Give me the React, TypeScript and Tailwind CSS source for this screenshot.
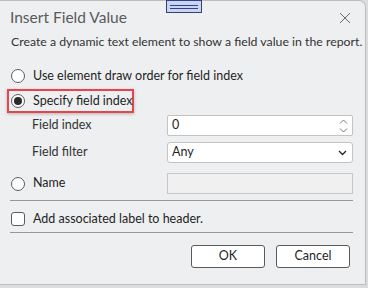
import React from 'react';

const font = { fontFamily: 'Lato, "Open Sans", sans-serif' };

function Radio({ checked }: { checked?: boolean }) {
  return (
    <span className="flex h-[14px] w-[14px] shrink-0 items-center justify-center rounded-full border border-[#5c5c5c] bg-white">
      {checked && <span className="h-[8px] w-[8px] rounded-full bg-[#2b2b2b]" />}
    </span>
  );
}

export default function App() {
  return (
    <div className="relative h-[288px] w-[368px] overflow-hidden bg-[#dcdcdc] text-[#1f1f1f]" style={font}>
      <div className="relative flex h-[285px] w-[366px] flex-col whitespace-nowrap rounded-tr-[7px] border-t border-r border-b border-[#bdbdbd] bg-[#eeeff1]">
        {/* title */}
        <div className="flex h-[33px] items-center justify-between pl-[10px] pr-[14px]">
          <span className="text-[15.5px] leading-none text-[#5a5a5a]">Insert Field Value</span>
          <svg width="12" height="12" viewBox="0 0 12 12">
            <path d="M1 1 L11 11 M11 1 L1 11" stroke="#6a6a6a" strokeWidth="1" />
          </svg>
        </div>
        <div className="flex h-[17px] items-center pl-[11px] text-[12.3px] text-[#333]">
          Create a dynamic text element to show a field value in the report.
        </div>

        {/* options */}
        <div className="flex flex-col text-[12.5px]">
          <label className="mt-[17px] flex h-[16px] items-center gap-[8px] pl-[11px]">
            <Radio />
            <span>Use element draw order for field index</span>
          </label>

          <div className="ml-[7px] mt-[5px] flex h-[24px] w-[127px] items-center gap-[8px] border-2 border-[#e8444c] pl-[2px] shadow-[0_1px_3px_rgba(0,0,0,0.25)]">
            <Radio checked />
            <span>Specify field index</span>
          </div>

          <div className="mt-[2px] flex h-[21px] items-center pl-[32px] pr-[12px]">
            <span className="w-[135px] text-[#333]">Field index</span>
            <div className="flex h-[21px] flex-1 items-center justify-between rounded-[2px] border border-[#c3c3c3] bg-white pl-[4px] pr-[4px]">
              <span>0</span>
              <svg width="9" height="16" viewBox="0 0 9 16">
                <path d="M1 5.5 L4.5 2 L8 5.5 M1 10.5 L4.5 14 L8 10.5" stroke="#777" strokeWidth="1" fill="none" />
              </svg>
            </div>
          </div>

          <div className="mt-[6px] flex h-[21px] items-center pl-[32px] pr-[12px]">
            <span className="w-[135px] text-[#333]">Field filter</span>
            <div className="flex h-[21px] flex-1 items-center justify-between rounded-[3px] border border-[#c3c3c3] bg-white pl-[4px] pr-[5px]">
              <span>Any</span>
              <svg width="9" height="6" viewBox="0 0 9 6">
                <path d="M1 1 L4.5 4.5 L8 1" stroke="#222" strokeWidth="1.3" fill="none" />
              </svg>
            </div>
          </div>

          <div className="mt-[10px] flex h-[21px] items-center pl-[11px] pr-[12px]">
            <span className="flex w-[156px] items-center gap-[8px]">
              <Radio />
              <span>Name</span>
            </span>
            <div className="h-[21px] flex-1 border border-[#c8c8c8] bg-[#f0f0f0]" />
          </div>

          <div className="ml-[10px] mr-[12px] mt-[6px] border-t border-[#9a9a9a]" />

          <label className="mt-[11px] flex h-[14px] items-center gap-[8px] pl-[11px]">
            <span className="h-[14px] w-[14px] rounded-[3px] border border-[#5c5c5c] bg-white" />
            <span>Add associated label to header.</span>
          </label>

          <div className="ml-[10px] mr-[12px] mt-[6px] border-t border-[#9a9a9a]" />

          <div className="mt-[12px] flex justify-end gap-[11px] pr-[15px]">
            <button className="h-[23px] w-[74px] rounded-[3px] border border-[#5a5a5a] bg-white text-[12.5px]">OK</button>
            <button className="h-[23px] w-[74px] rounded-[3px] border border-[#5a5a5a] bg-white text-[12.5px]">Cancel</button>
          </div>
        </div>

        {/* drag handle */}
        <div className="absolute left-[166px] top-[-1px] flex h-[13px] w-[36px] flex-col items-center justify-center gap-[2px] border border-[#34427a] bg-[#c9d4f2]">
          <span className="h-px w-[28px] bg-[#34427a]" />
          <span className="h-px w-[28px] bg-[#34427a]" />
        </div>
      </div>
    </div>
  );
}
